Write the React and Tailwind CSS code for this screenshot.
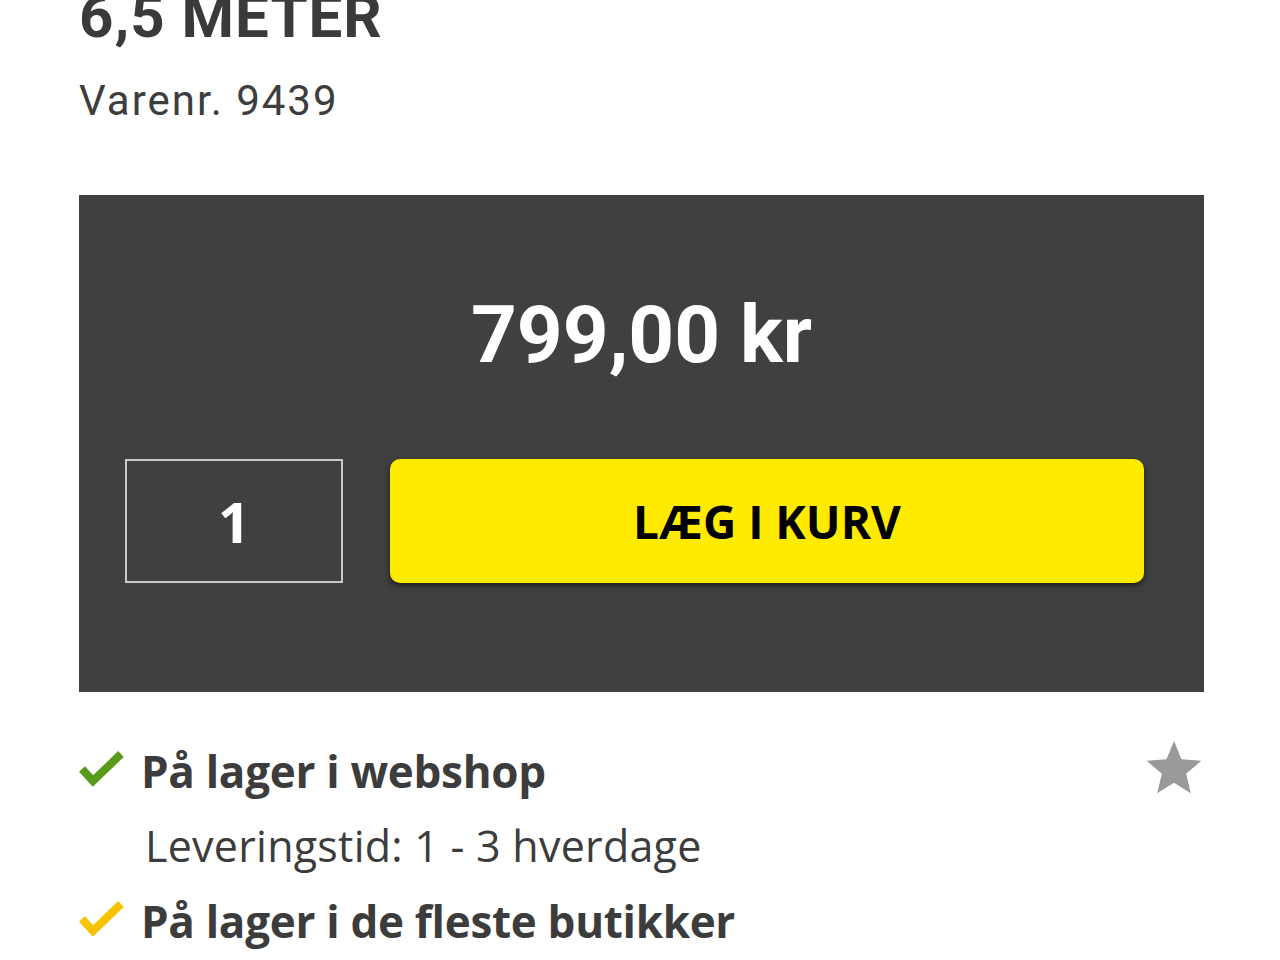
import React from 'react';

function Check({ color }) {
  return (
    <svg width="46" height="40" viewBox="0 0 46 40" className="shrink-0">
      <path d="M3 19 L14 31 L42 4" fill="none" stroke={color} strokeWidth="8" strokeLinejoin="miter" />
    </svg>
  );
}

export default function App() {
  const roboto = { fontFamily: 'Roboto, "Liberation Sans", sans-serif' };
  const openSans = { fontFamily: '"Open Sans", "Liberation Sans", sans-serif' };

  return (
    <div className="bg-white min-h-screen w-[1280px] h-[960px] overflow-hidden pl-[79px] pr-[76px]">
      {/* Title */}
      <h1 className="text-[60px] leading-none font-bold text-[#3a3a3a] mt-[-13px] tracking-[1px]" style={roboto}>
        6,5 METER
      </h1>
      <p className="text-[42px] leading-none text-[#3d3d3d] mt-[33px] tracking-[2px]" style={roboto}>
        Varenr. 9439
      </p>

      {/* Price panel */}
      <div className="mt-[73px] bg-[#404040] h-[497px] pt-[100px]">
        <div className="text-center text-white text-[80px] leading-none font-bold" style={roboto}>
          799,00 kr
        </div>
        <div className="flex mt-[84px] pl-[46px] gap-[47px]">
          <div className="w-[218px] h-[124px] border-2 border-[#c9c9c9] flex items-center justify-center text-white text-[56px] font-bold" style={openSans}>
            1
          </div>
          <button className="w-[754px] h-[124px] rounded-[10px] bg-[#ffeb00] text-black text-[46px] font-bold shadow-[0_3px_6px_rgba(0,0,0,0.55)]" style={openSans}>
            LÆG I KURV
          </button>
        </div>
      </div>

      {/* Stock info */}
      <div className="flex items-start justify-between mt-[57px]">
        <div className="flex items-start gap-[16px]">
          <div className="mt-[1px]"><Check color="#5a9a1a" /></div>
          <span className="text-[44px] leading-none font-bold text-[#3c3c3c] tracking-[-0.3px]" style={openSans}>
            På lager i webshop
          </span>
        </div>
        <svg width="64" height="62" viewBox="0 0 24 24" className="mt-[-12px] mr-[-2px]">
          <path d="M12 1.5 L14.9 8.6 L22.6 9.2 L16.7 14.2 L18.5 21.8 L12 17.7 L5.5 21.8 L7.3 14.2 L1.4 9.2 L9.1 8.6 Z" fill="#999999" />
        </svg>
      </div>
      <p className="ml-[66px] mt-[25px] text-[43px] leading-none text-[#3c3c3c] tracking-[0.25px]" style={openSans}>
        Leveringstid: 1 - 3 hverdage
      </p>
      <div className="flex items-start gap-[16px] mt-[32px]">
        <div className="mt-[1px]"><Check color="#f7c200" /></div>
        <span className="text-[44px] leading-none font-bold text-[#3c3c3c] tracking-[-0.3px]" style={openSans}>
          På lager i de fleste butikker
        </span>
      </div>
    </div>
  );
}
